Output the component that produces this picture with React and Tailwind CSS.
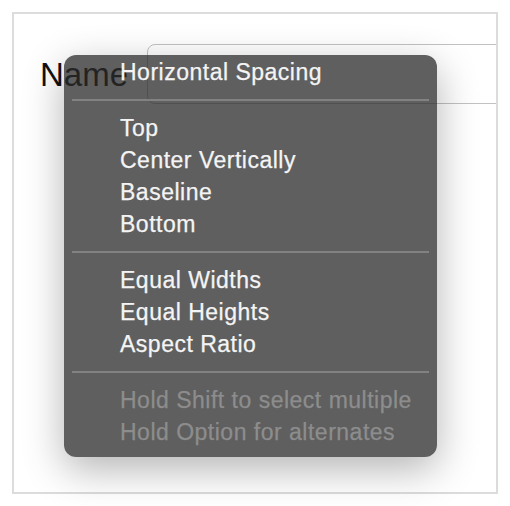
import React from "react";

const font = { fontFamily: '"Liberation Sans", Arial, sans-serif' };

function Item({ children, disabled }) {
  return (
    <div
      className={
        "h-8 flex items-center pl-[56px] text-[23px] tracking-[0.5px] whitespace-nowrap [-webkit-text-stroke:0.25px_currentColor] " +
        (disabled ? "text-[#8d8d8d]" : "text-[#f4f4f4]")
      }
    >
      {children}
    </div>
  );
}

function Sep() {
  return <div className="mx-2 my-[11px] h-[2px] bg-[#8b8b8b]/80" />;
}

export default function App() {
  return (
    <div className="relative w-[510px] h-[506px] bg-white" style={font}>
      <div className="absolute left-[12px] top-[12px] w-[486px] h-[482px] border-2 border-[#dcdcdc] overflow-hidden">
        <div className="flex items-center pt-[30px] pl-[26px]">
          <div className="w-[107px] text-[33px] leading-none text-[#111] pt-[1px]">Name</div>
          <div className="flex-1 -mr-4 h-[60px] rounded-l-[8px] border border-[#c2c2c2] bg-white" />
        </div>
      </div>
      <div className="absolute left-[64px] top-[55px] w-[373px] rounded-[12px] bg-[#2a2a2a]/75 pt-px pb-[9px] shadow-[0_12px_40px_rgba(0,0,0,0.3)]">
        <Item>Horizontal Spacing</Item>
        <Sep />
        <Item>Top</Item>
        <Item>Center Vertically</Item>
        <Item>Baseline</Item>
        <Item>Bottom</Item>
        <Sep />
        <Item>Equal Widths</Item>
        <Item>Equal Heights</Item>
        <Item>Aspect Ratio</Item>
        <Sep />
        <Item disabled>Hold Shift to select multiple</Item>
        <Item disabled>Hold Option for alternates</Item>
      </div>
    </div>
  );
}
